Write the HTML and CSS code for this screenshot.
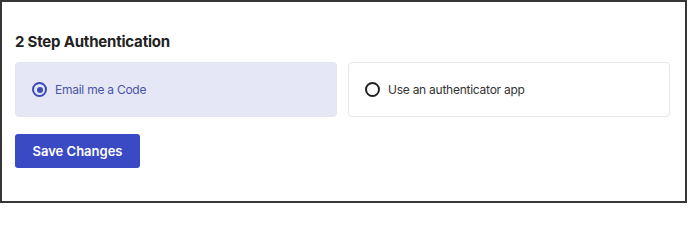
FILE: index.html
```html
<!DOCTYPE html>
<html>
<head>
<meta charset="utf-8">
<link rel="stylesheet" href="styles.css">
</head>
<body>
<div class="frame">
  <h2 class="title">2 Step Authentication</h2>
  <div class="options">
    <label class="option selected">
      <span class="radio checked"><span class="dot"></span></span>
      <span class="label">Email me a Code</span>
    </label>
    <label class="option">
      <span class="radio"></span>
      <span class="label">Use an authenticator app</span>
    </label>
  </div>
  <button class="save">Save Changes</button>
</div>
</body>
</html>
```
FILE: styles.css
```css
html, body {
  margin: 0;
  padding: 0;
  background: #ffffff;
}
body {
  font-family: Inter, "Liberation Sans", sans-serif;
}
.frame {
  box-sizing: border-box;
  width: 687px;
  height: 203px;
  border: 2px solid #363636;
  padding: 30px 15px 0 13px;
  background: #ffffff;
}
.title {
  margin: 0 0 10px 0;
  font-size: 15px;
  line-height: 20px;
  font-weight: 700;
  letter-spacing: -0.2px;
  color: #222222;
}
.options {
  display: grid;
  grid-template-columns: 322px 322px;
  column-gap: 11px;
}
.option {
  box-sizing: border-box;
  height: 55px;
  display: flex;
  align-items: center;
  gap: 8px;
  padding-left: 16px;
  border: 1px solid #e5e6ea;
  border-radius: 4px;
  background: #ffffff;
}
.option.selected {
  background: #e5e7f6;
  border-color: #e3e5f3;
}
.radio {
  box-sizing: border-box;
  width: 15px;
  height: 15px;
  border-radius: 50%;
  border: 2px solid #222222;
  display: flex;
  align-items: center;
  justify-content: center;
  flex: none;
}
.radio.checked {
  border-color: #3d4bb8;
}
.dot {
  width: 6px;
  height: 6px;
  border-radius: 50%;
  background: #3d4bb8;
}
.label {
  font-size: 12px;
  letter-spacing: -0.25px;
  color: #333333;
}
.selected .label {
  color: #4a54a6;
}
.save {
  margin-top: 17px;
  width: 125px;
  height: 34px;
  border: none;
  border-radius: 3px;
  background: #3a4ac4;
  color: #ffffff;
  font-family: Inter, "Liberation Sans", sans-serif;
  font-size: 13px;
  font-weight: 600;
  padding: 0;
}
```
